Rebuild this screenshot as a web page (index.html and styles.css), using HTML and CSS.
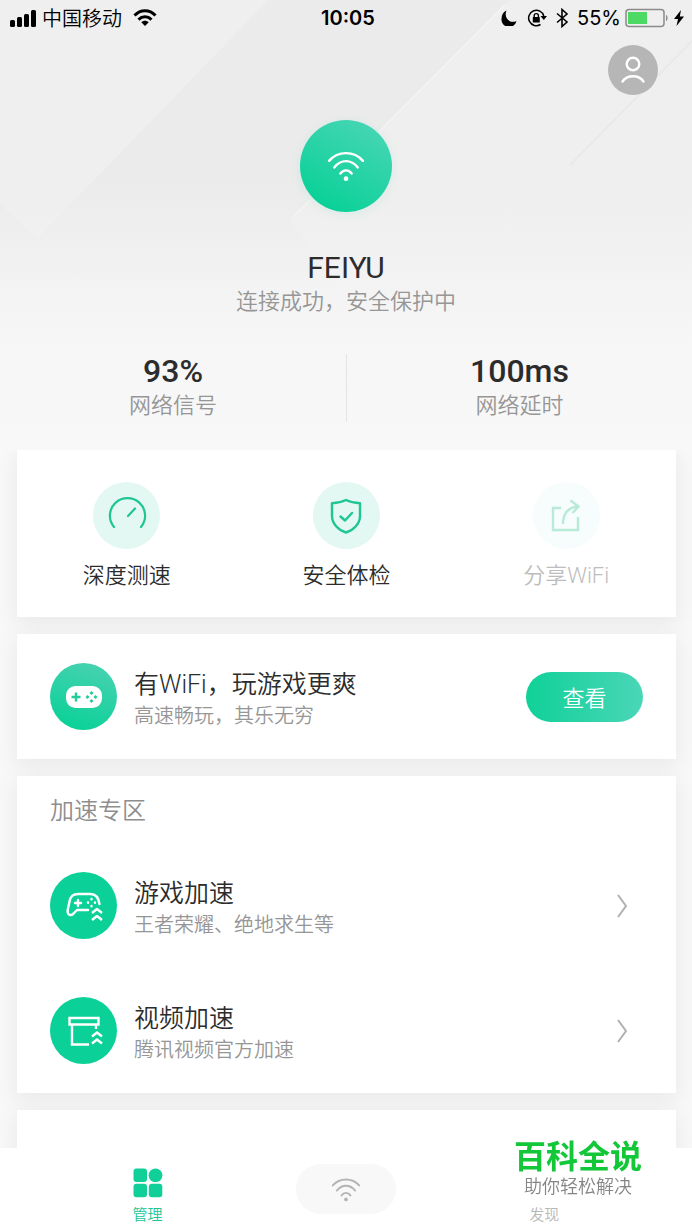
FILE: index.html
```html
<!DOCTYPE html>
<html lang="zh-CN">
<head>
<meta charset="utf-8">
<meta name="viewport" content="width=device-width, initial-scale=1">
<title>WiFi 管理</title>
<link rel="stylesheet" href="styles.css">
</head>
<body>
<svg class="defs" aria-hidden="true">
  <symbol id="wifi" viewBox="0 0 40 34">
    <g fill="none" stroke="currentColor" stroke-width="2.6" stroke-linecap="round">
      <path d="M2 11.5C11.5.6 28.500.6 38 11.500"/>
      <path d="M7.500 18.500C14.500 9.600 25.500 9.600 32.500 18.500"/>
      <path d="M14 25C17.200 20.500 22.800 20.500 26 25"/>
    </g>
    <circle cx="20" cy="30.500" r="2.500" fill="currentColor"/>
  </symbol>
</svg>

<header class="hero">
  <svg class="hero-bg" viewBox="0 0 692 450" preserveAspectRatio="none" aria-hidden="true">
    <defs>
      <linearGradient id="base" x1="0" y1="0" x2="0" y2="1">
        <stop offset="0" stop-color="#efefef"/><stop offset=".46" stop-color="#efefef"/>
        <stop offset=".75" stop-color="#f6f6f6"/><stop offset="1" stop-color="#f8f8f8"/>
      </linearGradient>
      <linearGradient id="facet" gradientUnits="userSpaceOnUse" x1="0" y1="0" x2="0" y2="290">
        <stop offset="0" stop-color="#e9e9e9" stop-opacity=".65"/><stop offset=".6" stop-color="#e9e9e9" stop-opacity=".65"/>
        <stop offset="1" stop-color="#ececec" stop-opacity="0"/>
      </linearGradient>
    </defs>
    <rect width="692" height="450" fill="url(#base)"/>
    <path d="M268 0H510L290 220L340 290H88L38 238Z" fill="url(#facet)"/>
    <path d="M0 203L36 238L88 290H0Z" fill="url(#facet)"/>
    <path d="M505 5L380 131M310 200L292 218" fill="none" stroke="#f3f3f3" stroke-width="2"/>
    <path d="M692 41L570 165" stroke="#e9e9e9" stroke-width="2"/>
  </svg>

  <div class="status">
    <div class="status-left">
      <svg width="28" height="18" viewBox="0 0 28 18" aria-hidden="true">
        <rect x="1" y="11" width="5" height="7" rx="1.500"/><rect x="8" y="8" width="5" height="10" rx="1.500"/>
        <rect x="15" y="5" width="5" height="13" rx="1.500"/><rect x="22" y="1" width="5" height="17" rx="1.500"/>
      </svg>
      <span class="carrier">中国移动</span>
      <svg class="signal-wifi" width="24" height="18" viewBox="0 0 24 18" aria-hidden="true">
        <g fill="none" stroke="#000" stroke-width="3"><path d="M1.500 6.500C7.500.2 16.500.2 22.500 6.500"/><path d="M5.500 10.600C9.300 6.900 14.700 6.900 18.500 10.600"/></g>
        <path d="M8.300 13.300C10.500 11.300 13.500 11.300 15.700 13.300L12 17Z"/>
      </svg>
    </div>
    <time class="clock">10:05</time>
    <div class="status-right">
      <svg class="moon" width="16" height="16" viewBox="0 0 16 16" aria-hidden="true"><path d="M5.500.5C2.500 2 .6 4.700.6 8A7.600 7.600 0 0 0 15.500 11C9 14.200 2.300 8 5.500.5Z"/></svg>
      <svg class="lock" width="20" height="18" viewBox="0 0 20 18" aria-hidden="true">
        <path d="M16.800 7A7.700 7.700 0 1 0 13.500 15.500" fill="none" stroke="#000" stroke-width="1.500"/><path d="M13.500 7H20L16.800 11Z"/>
        <rect x="5.800" y="8" width="7" height="5.500" rx=".6"/><path d="M7.200 8.500V6.700a2.100 2.100 0 0 1 4.200 0V8.500" fill="none" stroke="#000" stroke-width="1.400"/>
      </svg>
      <svg width="14" height="20" viewBox="0 0 14 20" aria-hidden="true"><path d="M2 5.500L12 14L7 18.500V1.500L12 6L2 14.500" fill="none" stroke="#000" stroke-width="1.600"/></svg>
      <span class="percent">55%</span>
      <svg width="44" height="20" viewBox="0 0 44 20" aria-hidden="true">
        <rect x="1" y="1.500" width="38" height="17" rx="3" fill="none" stroke="#8b8b8b" stroke-width="1.500"/>
        <rect x="3" y="4" width="19" height="12" fill="#4cd964"/><path d="M41 7c2 0 2 6 0 6Z" fill="#8b8b8b"/>
      </svg>
      <svg width="12" height="18" viewBox="0 0 12 18" aria-hidden="true"><path d="M8 1L1 10H5L3.500 17L11 7.500H6.800Z"/></svg>
    </div>
  </div>

  <button class="avatar" type="button" aria-label="个人中心">
    <svg width="26" height="28" viewBox="0 0 26 28" fill="none" stroke="#fff" stroke-width="2.400" stroke-linecap="round" aria-hidden="true">
      <circle cx="13" cy="8" r="6.300"/><path d="M2.500 25.500C7 18.500 19 18.500 23.500 25.500"/>
    </svg>
  </button>

  <div class="network">
    <div class="network-icon"><svg width="38" height="32" aria-hidden="true"><use href="#wifi"/></svg></div>
    <h1 class="network-name">FEIYU</h1>
    <p class="network-state">连接成功，安全保护中</p>
  </div>

  <dl class="stats">
    <div class="stat"><dd class="stat-value">93%</dd><dt class="stat-label">网络信号</dt></div>
    <div class="stat"><dd class="stat-value">100ms</dd><dt class="stat-label">网络延时</dt></div>
  </dl>
</header>

<main class="cards">
  <section class="card actions">
    <button class="action" type="button">
      <span class="action-icon"><svg width="40" height="40" viewBox="0 0 40 40" fill="none" stroke="#20c594" stroke-width="2.200" stroke-linecap="round" aria-hidden="true">
        <path d="M7 31A17.600 17.600 0 1 1 34 31"/><path d="M21 20L28 12.500"/></svg></span>
      <span class="action-label">深度测速</span>
    </button>
    <button class="action" type="button">
      <span class="action-icon"><svg width="40" height="40" viewBox="0 0 40 40" fill="none" stroke="#20c594" stroke-width="2.400" stroke-linejoin="round" stroke-linecap="round" aria-hidden="true">
        <path d="M20 4C24 6 29 7 34 7.200V20C34 28 27 34.500 20 36.500C13 34.500 6 28 6 20V7.200C11 7 16 6 20 4Z"/><path d="M14.500 20.500L19 24.500L26 17"/></svg></span>
      <span class="action-label">安全体检</span>
    </button>
    <button class="action" type="button" disabled>
      <span class="action-icon"><svg width="40" height="40" viewBox="0 0 40 40" fill="none" stroke="#b9ead8" stroke-width="2.400" aria-hidden="true">
        <path d="M15 12H7V34H32V21"/><path d="M17 28C17 18 21 12 31 10.500M24.500 4.500L32.500 10.500L26.500 17"/></svg></span>
      <span class="action-label">分享WiFi</span>
    </button>
  </section>

  <section class="card row">
    <span class="row-icon row-icon-gradient"><svg width="36" height="22" viewBox="0 0 36 22" aria-hidden="true">
      <rect width="36" height="22" rx="9.500" fill="#fff"/>
      <path d="M10 6.500V15.500M5.500 11H14.500" stroke="#22cc9a" stroke-width="2.400"/>
      <g fill="#22cc9a"><path d="M25.500 5L27.500 7L25.500 9L23.500 7ZM25.500 13L27.500 15L25.500 17L23.500 15ZM21.500 9L23.500 11L21.500 13L19.500 11ZM29.500 9L31.500 11L29.500 13L27.500 11Z"/></g></svg></span>
    <div class="row-text"><h2 class="row-title">有WiFi，玩游戏更爽</h2><p class="row-sub">高速畅玩，其乐无穷</p></div>
    <button class="view" type="button">查看</button>
  </section>

  <section class="card">
    <h2 class="card-heading">加速专区</h2>
    <a class="row" href="#game">
      <span class="row-icon"><svg width="38" height="32" viewBox="0 0 38 32" fill="none" stroke="#fff" stroke-width="2.400" stroke-linecap="round" stroke-linejoin="round" aria-hidden="true">
        <path d="M34.500 14C33.500 7.500 30 4 25.500 4H13C7.500 4 5.500 6.500 4.500 11.500L2.700 20C2 25.500 6.500 26.500 9 23L12 20H23"/>
        <path d="M13 10V16M10 13H16"/><path d="M26.500 9v.2M26.500 16v.2M23 12.500v.2M30 12.500v.2" stroke-width="2.400"/>
        <path d="M27 23L32 19L37 23M27 30L32 26L37 30" stroke-linecap="butt"/></svg></span>
      <span class="row-text"><strong class="row-title">游戏加速</strong><span class="row-sub">王者荣耀、绝地求生等</span></span>
      <svg class="chevron" width="12" height="26" viewBox="0 0 12 26" aria-hidden="true"><path d="M2 2L10 13L2 24"/></svg>
    </a>
    <a class="row" href="#video">
      <span class="row-icon"><svg width="38" height="32" viewBox="0 0 38 32" fill="none" stroke="#fff" stroke-width="2.400" aria-hidden="true">
        <path d="M4.500 3H33.500V9.500H4.500Z"/><path d="M7 9.500V29.500H24M31 9.500V14"/>
        <path d="M27 21.500L32 17.500L37 21.500M27 28.500L32 24.500L37 28.500" stroke-linejoin="round"/></svg></span>
      <span class="row-text"><strong class="row-title">视频加速</strong><span class="row-sub">腾讯视频官方加速</span></span>
      <svg class="chevron" width="12" height="26" viewBox="0 0 12 26" aria-hidden="true"><path d="M2 2L10 13L2 24"/></svg>
    </a>
  </section>

  <section class="card card-next"></section>
</main>

<nav class="tabbar">
  <a class="tab tab-active" href="#manage">
    <svg class="tab-icon" viewBox="0 0 30 30" fill="#10cf98" aria-hidden="true">
      <rect x=".5" y=".5" width="13.500" height="13.500" rx="3"/><circle cx="22.500" cy="7.300" r="6.900"/>
      <rect x=".5" y="15.800" width="13.500" height="13.500" rx="3"/><rect x="15.800" y="15.800" width="13.500" height="13.500" rx="3"/></svg>
    <span>管理</span>
  </a>
  <a class="tab-wifi" href="#wifi-home" aria-label="WiFi"><svg width="30" height="25" aria-hidden="true"><use href="#wifi"/></svg></a>
  <a class="tab" href="#discover"><span class="tab-icon"></span><span>发现</span></a>
</nav>

<aside class="brand">
  <strong class="brand-name">百科全说</strong>
  <span class="brand-slogan">助你轻松解决</span>
</aside>
</body>
</html>
```
FILE: styles.css
```css
* { box-sizing: border-box; }

body {
  margin: 0;
  background: #f8f8f8;
  color: #2c2c2c;
  font-family: Roboto, "Noto Sans CJK SC", sans-serif;
  font-weight: 350;
  height: 100vh;
  overflow: hidden;
}

h1, h2, p, dl, dd { margin: 0; font-weight: inherit; }
a { color: inherit; text-decoration: none; }
svg { display: block; flex: none; }
button { border: 0; padding: 0; background: none; color: inherit; font: inherit; cursor: pointer; }

.defs { position: absolute; width: 0; height: 0; }

.hero {
  position: relative;
  isolation: isolate;
  display: flex;
  flex-direction: column;
  padding-bottom: 28px;
}
.hero-bg { position: absolute; inset: 0; z-index: -1; width: 100%; height: 100%; }

.status {
  display: grid;
  grid-template-columns: 1fr auto 1fr;
  align-items: center;
  height: 35px;
  padding: 0 7px 0 9px;
  color: #000;
  font-family: Inter, "Noto Sans CJK SC", sans-serif;
  font-size: 20px;
}
.status-left, .status-right { display: flex; align-items: center; }
.status-left { gap: 5px; }
.status-right { justify-content: flex-end; gap: 4px; }
.moon { margin-right: 6px; }
.lock { margin-right: 4px; }
.signal-wifi { margin-left: 6px; }
.clock { padding-left: 2px; font-weight: 600; }
.percent { padding-left: 4px; font-weight: 400; }

.avatar {
  display: grid;
  place-items: center;
  align-self: flex-end;
  width: 50px;
  height: 50px;
  margin: 10px 34px 0;
  border-radius: 50%;
  background: #b6b6b6;
}

.network { display: flex; flex-direction: column; align-items: center; margin-top: 25px; }
.network-icon {
  display: grid;
  place-items: center;
  width: 92px;
  height: 92px;
  border-radius: 50%;
  background: linear-gradient(30deg, #0bd198 15%, #4ad6b6 95%);
  box-shadow: 0 2px 12px rgba(30, 208, 155, .1);
  color: #fff;
}
.network-name { margin-top: 38px; font-size: 30px; font-weight: 400; line-height: 36px; }
.network-state { color: #969696; font-size: 22px; line-height: 32px; }

.stats { display: grid; grid-template-columns: 1fr 1fr; margin-top: 36px; text-align: center; }
.stat + .stat { border-left: 1px solid #e4e4e4; }
.stat { display: flex; flex-direction: column; }
.stat-value { font-size: 32px; font-weight: 500; line-height: 34px; }
.stat-label { padding-top: 2px; color: #969696; font-size: 22px; line-height: 32px; }

.cards { display: flex; flex-direction: column; gap: 17px; padding: 0 16px 0 17px; }
.card { background: #fff; box-shadow: 0 6px 20px 2px rgba(0, 0, 0, .06); }

.actions { display: grid; grid-template-columns: repeat(3, 1fr); padding: 32px 0 24px; }
.action { display: flex; flex-direction: column; align-items: center; gap: 9px; }
.action-icon, .row-icon { display: grid; place-items: center; flex: none; width: 67px; height: 67px; border-radius: 50%; }
.action-icon { background: #e3f8f2; }
.action-label { font-size: 22px; line-height: 35px; }
.action:disabled { color: #bdbdbd; cursor: default; }
.action:disabled .action-icon { background: #f7fdfc; }

.row { display: flex; align-items: center; gap: 17px; padding: 29px 33px; }
.row-icon { background: #0bd198; }
.row-icon-gradient { background: linear-gradient(20deg, #0bd198 10%, #45d2b0 90%); }
.row-text { display: flex; flex: 1; flex-direction: column; padding-top: 4px; }
.row-title { font-size: 25px; font-weight: 350; line-height: 34px; }
.row-sub { color: #969696; font-size: 20px; line-height: 28px; }
.view {
  width: 117px;
  height: 50px;
  padding-bottom: 2px;
  border-radius: 25px;
  background: linear-gradient(90deg, #10d198, #4ad6b8);
  color: #fff;
  font-size: 22px;
}
.chevron { margin-right: 15px; fill: none; stroke: #b0b0b0; stroke-width: 2; }
.card-heading { padding: 3px 33px 0; color: #8e8e8e; font-size: 24px; line-height: 64px; }
.card-next { height: 125px; }

.tabbar {
  position: fixed;
  right: 0;
  bottom: 0;
  left: 0;
  display: grid;
  grid-template-columns: repeat(3, 1fr);
  justify-items: center;
  align-items: center;
  height: 82px;
  padding: 0 7%;
  background: #fff;
}
.tab { display: flex; flex-direction: column; align-items: center; gap: 5px; padding-top: 16px; color: #b8b8b8; font-size: 15px; line-height: 24px; }
.tab-active { color: #20c594; }
.tab-icon { width: 30px; height: 30px; }
.tab-wifi { display: grid; place-items: center; width: 100px; height: 50px; border-radius: 25px; background: #f8f8f8; color: #b4b4b4; }

.brand {
  position: fixed;
  right: 24px;
  bottom: 31px;
  display: flex;
  flex-direction: column;
  align-items: center;
  padding: 0 26px;
  background: #fff;
}
.brand-name { color: #12c738; font-size: 32px; font-weight: 700; line-height: 36px; }
.brand-slogan { color: #858585; font-size: 18px; line-height: 24px; }
```
